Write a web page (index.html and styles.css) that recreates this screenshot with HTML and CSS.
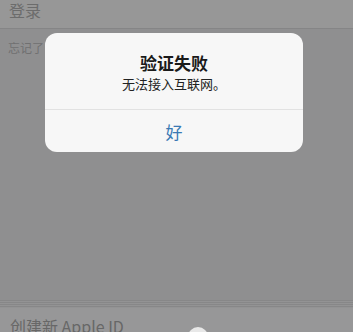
FILE: index.html
```html
<!DOCTYPE html>
<html lang="zh">
<head>
<meta charset="utf-8">
<link rel="stylesheet" href="styles.css">
</head>
<body>
<div class="screen">
  <div class="header">登录</div>
  <div class="forgot">忘记了</div>
  <div class="spacer"></div>
  <div class="sep"></div>
  <div class="create">创建新 Apple ID</div>
  <div class="dot"></div>
  <div class="alert">
    <div class="alert-body">
      <div class="alert-title">验证失败</div>
      <div class="alert-msg">无法接入互联网。</div>
    </div>
    <div class="alert-btn">好</div>
  </div>
</div>
</body>
</html>
```
FILE: styles.css
```css
html, body {
  margin: 0;
  padding: 0;
}
body {
  width: 353px;
  height: 332px;
  overflow: hidden;
  background: #8f8f90;
  font-family: "Noto Sans CJK SC", "Noto Sans", sans-serif;
}
.screen {
  position: relative;
  width: 353px;
  height: 332px;
  display: flex;
  flex-direction: column;
  overflow: hidden;
}
.header {
  height: 29px;
  box-sizing: border-box;
  background: #979797;
  border-bottom: 1px solid #858586;
  color: #6c6c6c;
  font-size: 16px;
  line-height: 20px;
  padding: 0 0 0 9px;
}
.forgot {
  color: #707071;
  font-size: 12px;
  line-height: 14px;
  padding: 12px 0 0 8px;
}
.spacer {
  flex: 1;
}
.sep {
  height: 8px;
  background: repeating-linear-gradient(#878788 0 1px, #939394 1px 2px);
}
.create {
  height: 28px;
  background: #979798;
  color: #676767;
  font-size: 16px;
  line-height: 18px;
  padding: 9px 0 0 10px;
  box-sizing: border-box;
  flex: none;
  margin-bottom: -4px;
}
.dot {
  position: absolute;
  left: 188px;
  top: 327px;
  width: 20px;
  height: 20px;
  border-radius: 50%;
  background: #e8e8e8;
}
.alert {
  position: absolute;
  left: 45px;
  top: 33px;
  width: 258px;
  height: 119px;
  background: #f7f7f7;
  border-radius: 12px;
  display: flex;
  flex-direction: column;
  overflow: hidden;
}
.alert-body {
  height: 77px;
  border-bottom: 1px solid #e2e2e2;
  display: flex;
  flex-direction: column;
  align-items: center;
  padding-top: 19px;
  box-sizing: border-box;
}
.alert-title {
  font-size: 17px;
  font-weight: 600;
  color: #1a1a1a;
  line-height: 22px;
}
.alert-msg {
  font-size: 13px;
  color: #222;
  line-height: 16px;
  margin-top: 2px;
}
.alert-btn {
  flex: 1;
  display: flex;
  align-items: center;
  justify-content: center;
  font-size: 17px;
  color: #3a7ab4;
}
```
